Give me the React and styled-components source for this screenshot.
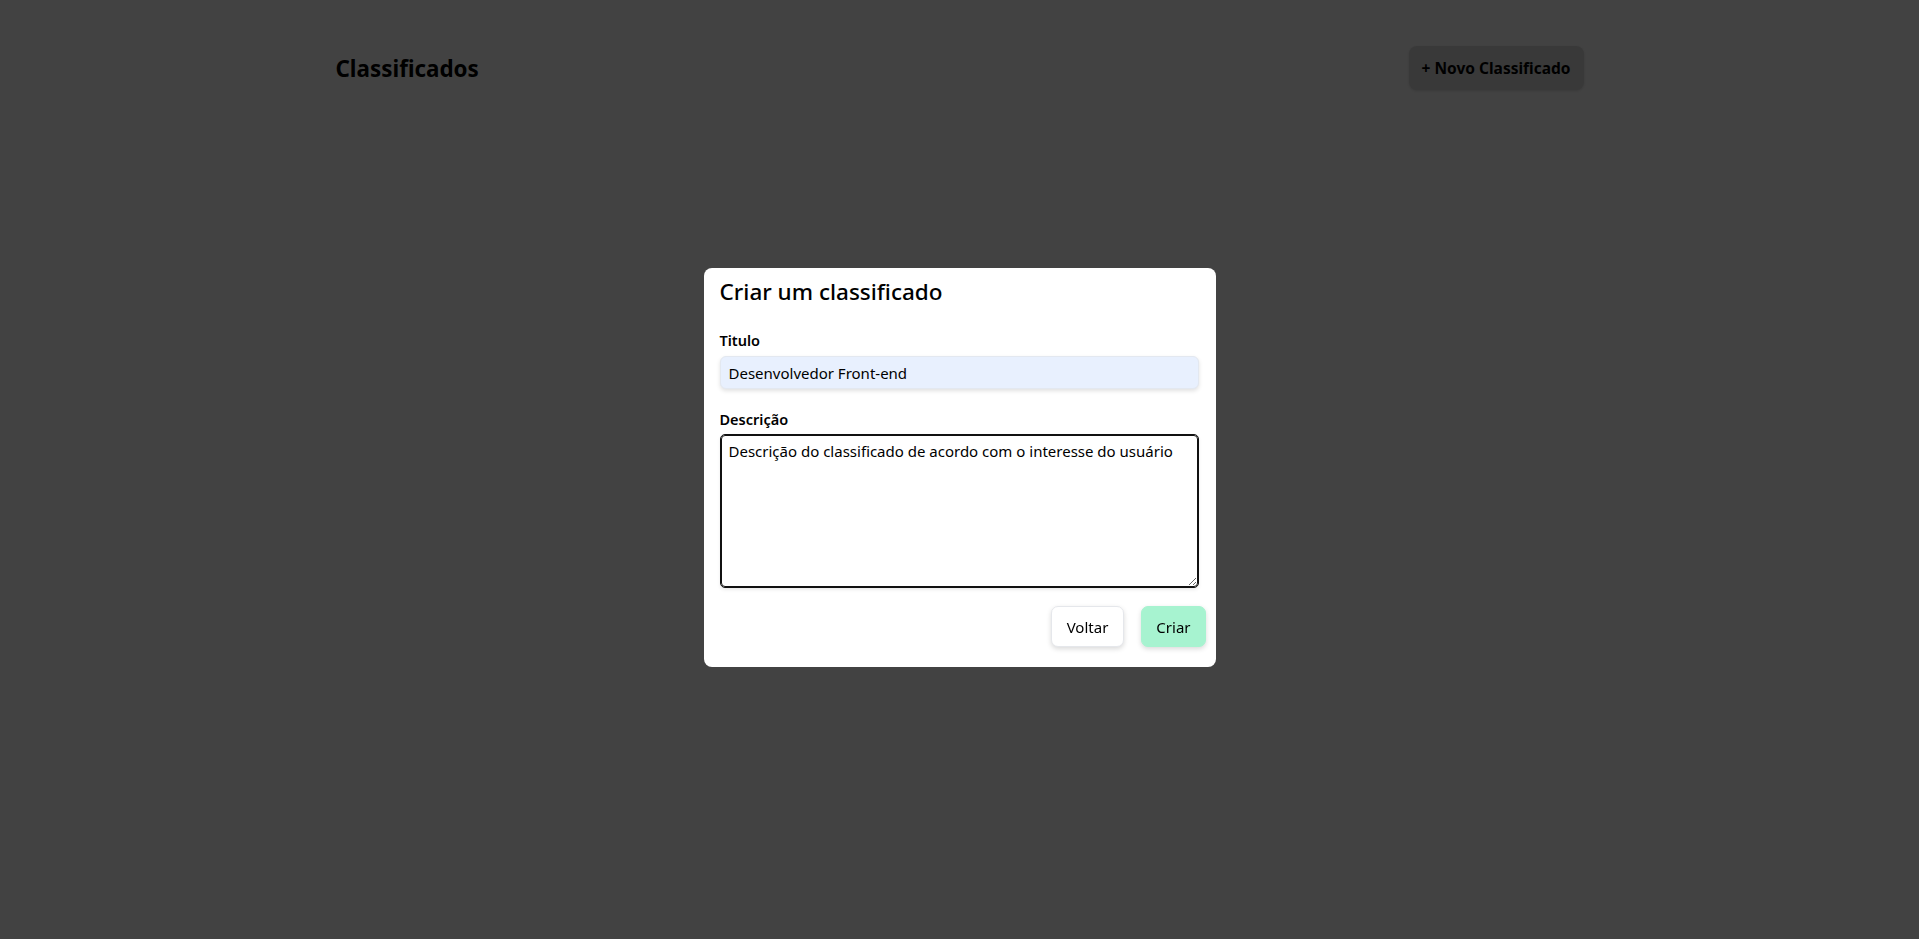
import React, { useEffect, useRef } from "react";
import styled, { createGlobalStyle } from "styled-components";

const GlobalStyle = createGlobalStyle`
  * { box-sizing: border-box; }
  html, body {
    margin: 0;
    padding: 0;
    background: #ffffff;
    font-family: "Noto Sans", "Open Sans", sans-serif;
    color: #000;
  }
`;

const Page = styled.div`
  min-height: 100vh;
`;

const Header = styled.header`
  max-width: 1248px;
  margin: 0 auto;
  padding-top: 46px;
  display: flex;
  align-items: center;
  justify-content: space-between;
`;

const Title = styled.h1`
  margin: 0;
  font-size: 22.4px;
  font-weight: 700;
`;

const NewButton = styled.button`
  height: 44px;
  padding: 0 13px;
  border: none;
  border-radius: 8px;
  background: #dcdcdc;
  box-shadow: 0 1px 3px rgba(0, 0, 0, 0.15);
  font-family: inherit;
  font-size: 15.5px;
  font-weight: 700;
  color: #000;
`;

const Overlay = styled.div`
  position: fixed;
  inset: 0;
  background: rgba(0, 0, 0, 0.74);
  display: flex;
  align-items: center;
  justify-content: center;
`;

const Modal = styled.form`
  width: 512px;
  margin-bottom: 4px;
  background: #fff;
  border-radius: 8px;
  padding: 8px 16px 20px;
  display: flex;
  flex-direction: column;
`;

const ModalTitle = styled.h2`
  margin: 0 0 22px;
  font-size: 22.5px;
  font-weight: 500;
  line-height: 32px;
`;

const Label = styled.label`
  font-size: 14.5px;
  font-weight: 600;
  line-height: 20px;
  margin-bottom: 6px;
`;

const Input = styled.input`
  height: 33px;
  margin-right: 1px;
  border: 1px solid #e3e8f0;
  border-radius: 6px;
  background: #e8f0fe;
  box-shadow: 0 2px 4px rgba(0, 0, 0, 0.12);
  padding: 0 8px;
  font-family: inherit;
  font-size: 15px;
  color: #000;
  margin-bottom: 20px;
  outline: none;
`;

const TextArea = styled.textarea`
  height: 152px;
  margin: 0 2px 0 1px;
  border: 1px solid #111;
  outline: 1px solid #111;
  border-radius: 4px;
  padding: 5px 7px;
  font-family: inherit;
  font-size: 15px;
  color: #000;
  resize: vertical;
  box-shadow: 0 2px 4px rgba(0, 0, 0, 0.12);

  &:focus {
    outline: 1px solid #111;
  }
`;

const Footer = styled.div`
  display: flex;
  justify-content: flex-end;
  gap: 17px;
  margin-top: 19px;
  margin-right: -6px;
`;

const ActionButton = styled.button`
  height: 41px;
  padding: 0 ${(p) => (p.$primary ? 14 : 15)}px;
  border: 1px solid ${(p) => (p.$primary ? "#a7f3d0" : "#e5e7eb")};
  border-radius: 7px;
  background: ${(p) => (p.$primary ? "#a7f3d0" : "#fff")};
  box-shadow: 0 2px 5px rgba(0, 0, 0, 0.15);
  font-family: inherit;
  font-size: 15px;
  color: #000;
`;

export default function App() {
  const areaRef = useRef(null);

  useEffect(() => {
    const el = areaRef.current;
    if (el) {
      el.focus();
      el.setSelectionRange(el.value.length, el.value.length);
    }
  }, []);

  return (
    <Page>
      <GlobalStyle />
      <Header>
        <Title>Classificados</Title>
        <NewButton type="button">+ Novo Classificado</NewButton>
      </Header>
      <Overlay>
        <Modal onSubmit={(e) => e.preventDefault()}>
          <ModalTitle>Criar um classificado</ModalTitle>
          <Label htmlFor="titulo">Titulo</Label>
          <Input id="titulo" defaultValue="Desenvolvedor Front-end" />
          <Label htmlFor="descricao">Descrição</Label>
          <TextArea
            id="descricao"
            ref={areaRef}
            defaultValue="Descrição do classificado de acordo com o interesse do usuário"
          />
          <Footer>
            <ActionButton type="button">Voltar</ActionButton>
            <ActionButton type="submit" $primary>
              Criar
            </ActionButton>
          </Footer>
        </Modal>
      </Overlay>
    </Page>
  );
}
